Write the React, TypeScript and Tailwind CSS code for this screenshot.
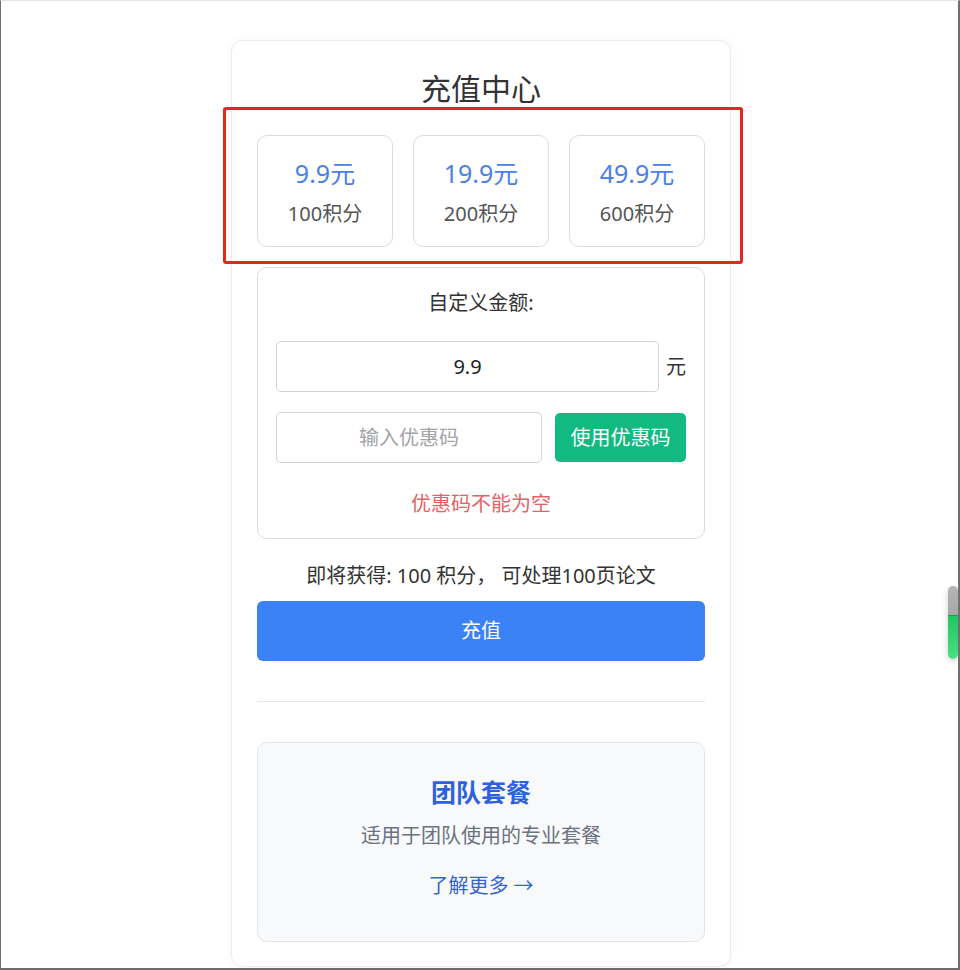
import React, { useState } from "react";

const packages = [
  { price: "9.9元", points: "100积分" },
  { price: "19.9元", points: "200积分" },
  { price: "49.9元", points: "600积分" },
];

export default function App() {
  const [amount, setAmount] = useState("9.9");
  const [coupon, setCoupon] = useState("");

  return (
    <div
      className="relative w-[960px] h-[970px] overflow-hidden bg-white border-t border-t-[#e4e4e4] border-l border-l-[#707070] border-r-2 border-r-[#707070] border-b-2 border-b-[#6c6c6c]"
      style={{ fontFamily: '"Noto Sans", "Noto Sans CJK SC", sans-serif' }}
    >
      <div className="flex justify-center pt-[39px] pl-[3px]">
        <div className="w-[500px] bg-white border border-[#ececec] rounded-xl shadow-[0_0_10px_rgba(0,0,0,0.05)] px-[25px] pt-[27px] pb-[24px]">
          <h1 className="text-center text-[30px] leading-[42px] text-[#333]">充值中心</h1>

          {/* preset packages */}
          <div className="mt-[25px] grid grid-cols-3 gap-[20px]">
            {packages.map((p) => (
              <div
                key={p.price}
                className="h-[112px] border border-[#dcdcdc] rounded-[10px] bg-white flex flex-col items-center pt-[21px]"
              >
                <div className="text-[25px] leading-[32px] text-[#4a80e8]">{p.price}</div>
                <div className="mt-[10px] text-[20px] leading-[30px] text-[#555]">{p.points}</div>
              </div>
            ))}
          </div>

          {/* custom amount */}
          <div className="mt-[20px] border border-[#dcdcdc] rounded-[10px] px-[18px] pt-[20px] pb-[19px]">
            <div className="text-center text-[20px] leading-[30px] text-[#333]">自定义金额:</div>
            <div className="mt-[23px] flex items-center">
              <input
                value={amount}
                onChange={(e) => setAmount(e.target.value)}
                className="flex-1 min-w-0 h-[51px] border border-[#d4d4d4] rounded-[5px] text-center text-[20px] text-[#222] outline-none"
              />
              <span className="ml-[7px] text-[20px] text-[#333]">元</span>
            </div>
            <div className="mt-[20px] flex items-center gap-[13px]">
              <input
                value={coupon}
                onChange={(e) => setCoupon(e.target.value)}
                placeholder="输入优惠码"
                className="flex-1 min-w-0 h-[51px] border border-[#d4d4d4] rounded-[5px] text-center text-[20px] text-[#333] placeholder:text-[#a3a3a8] outline-none"
              />
              <button className="w-[131px] h-[49px] rounded-[5px] bg-[#12b981] text-white text-[20px]">
                使用优惠码
              </button>
            </div>
            <div className="mt-[26px] text-center text-[20px] leading-[30px] text-[#e36464]">优惠码不能为空</div>
          </div>

          <div className="mt-[22px] text-center text-[20px] leading-[30px] text-[#333]">
            即将获得: 100 积分， 可处理100页论文
          </div>
          <button className="mt-[10px] w-full h-[60px] rounded-[6px] bg-[#3b82f6] text-white text-[20px]">充值</button>

          <div className="mt-[40px] h-px bg-[#e6e7eb]" />

          {/* team plan */}
          <div className="mt-[40px] h-[200px] border border-[#e3e5e9] rounded-[10px] bg-[#f8f9fb] flex flex-col items-center pt-[33px]">
            <div className="text-[25px] leading-[32px] font-bold text-[#2d62dc]">团队套餐</div>
            <div className="mt-[13px] text-[20px] leading-[30px] text-[#6b7280]">适用于团队使用的专业套餐</div>
            <a className="mt-[20px] text-[20px] leading-[30px] text-[#3563cf] cursor-pointer">了解更多 →</a>
          </div>
        </div>
      </div>

      {/* highlight frame over the packages */}
      <div className="absolute left-[222px] top-[106px] w-[520px] h-[157px] border-[3px] border-[#e8251c] rounded-[3px] pointer-events-none" />

      {/* floating progress pill */}
      <div className="absolute left-[947px] top-[585px] w-[10px] h-[73px] rounded-full overflow-hidden shadow-[0_2px_6px_rgba(0,0,0,0.2)] flex flex-col">
        <div className="h-[29px] bg-gradient-to-b from-[#b4b4b4] to-[#a8a8a8]" />
        <div className="flex-1 bg-gradient-to-b from-[#22c55e] to-[#4ade80] border-t border-t-[#1aa34a]" />
      </div>
    </div>
  );
}
